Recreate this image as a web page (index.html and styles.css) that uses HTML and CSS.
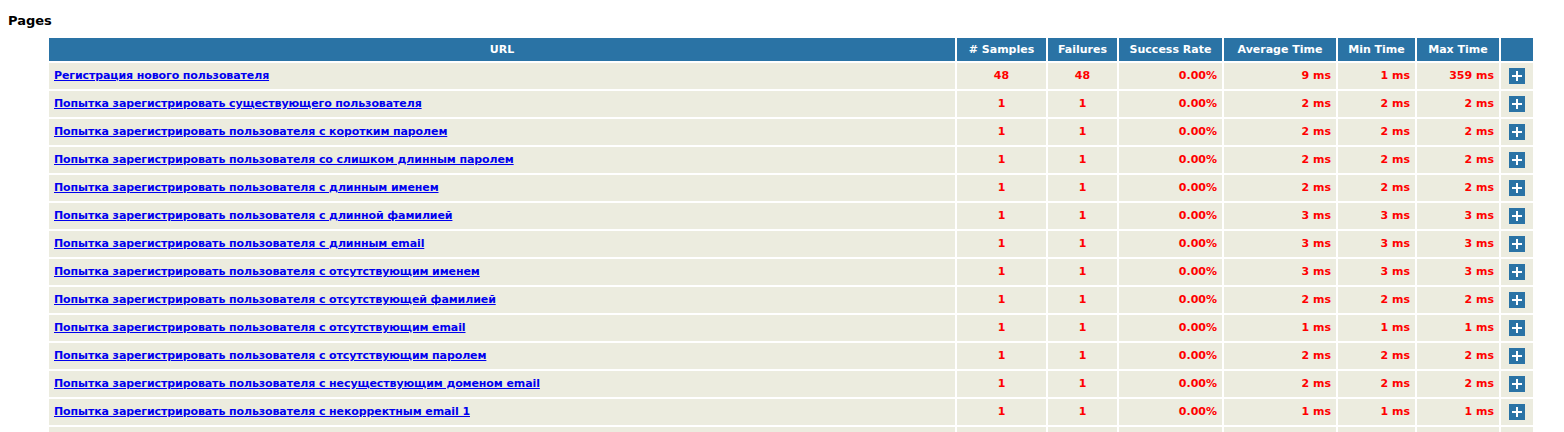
FILE: index.html
```html
<!DOCTYPE html>
<html>
<head>
<meta charset="utf-8">
<link rel="stylesheet" href="styles.css">
</head>
<body>
<h2 class="title">Pages</h2>
<table class="details">
<colgroup>
<col class="c-url"><col class="c-samples"><col class="c-fail"><col class="c-rate"><col class="c-avg"><col class="c-min"><col class="c-max"><col class="c-btn">
</colgroup>
<thead>
<tr><th>URL</th><th># Samples</th><th>Failures</th><th>Success Rate</th><th>Average Time</th><th>Min Time</th><th>Max Time</th><th></th></tr>
</thead>
<tbody>
<tr><td class="url"><a href="#">Регистрация нового пользователя</a></td><td class="ctr">48</td><td class="ctr">48</td><td>0.00%</td><td>9 ms</td><td>1 ms</td><td>359 ms</td><td class="btn"><span class="plus"></span></td></tr>
<tr><td class="url"><a href="#">Попытка зарегистрировать существующего пользователя</a></td><td class="ctr">1</td><td class="ctr">1</td><td>0.00%</td><td>2 ms</td><td>2 ms</td><td>2 ms</td><td class="btn"><span class="plus"></span></td></tr>
<tr><td class="url"><a href="#">Попытка зарегистрировать пользователя с коротким паролем</a></td><td class="ctr">1</td><td class="ctr">1</td><td>0.00%</td><td>2 ms</td><td>2 ms</td><td>2 ms</td><td class="btn"><span class="plus"></span></td></tr>
<tr><td class="url"><a href="#">Попытка зарегистрировать пользователя со слишком длинным паролем</a></td><td class="ctr">1</td><td class="ctr">1</td><td>0.00%</td><td>2 ms</td><td>2 ms</td><td>2 ms</td><td class="btn"><span class="plus"></span></td></tr>
<tr><td class="url"><a href="#">Попытка зарегистрировать пользователя с длинным именем</a></td><td class="ctr">1</td><td class="ctr">1</td><td>0.00%</td><td>2 ms</td><td>2 ms</td><td>2 ms</td><td class="btn"><span class="plus"></span></td></tr>
<tr><td class="url"><a href="#">Попытка зарегистрировать пользователя с длинной фамилией</a></td><td class="ctr">1</td><td class="ctr">1</td><td>0.00%</td><td>3 ms</td><td>3 ms</td><td>3 ms</td><td class="btn"><span class="plus"></span></td></tr>
<tr><td class="url"><a href="#">Попытка зарегистрировать пользователя с длинным email</a></td><td class="ctr">1</td><td class="ctr">1</td><td>0.00%</td><td>3 ms</td><td>3 ms</td><td>3 ms</td><td class="btn"><span class="plus"></span></td></tr>
<tr><td class="url"><a href="#">Попытка зарегистрировать пользователя с отсутствующим именем</a></td><td class="ctr">1</td><td class="ctr">1</td><td>0.00%</td><td>3 ms</td><td>3 ms</td><td>3 ms</td><td class="btn"><span class="plus"></span></td></tr>
<tr><td class="url"><a href="#">Попытка зарегистрировать пользователя с отсутствующей фамилией</a></td><td class="ctr">1</td><td class="ctr">1</td><td>0.00%</td><td>2 ms</td><td>2 ms</td><td>2 ms</td><td class="btn"><span class="plus"></span></td></tr>
<tr><td class="url"><a href="#">Попытка зарегистрировать пользователя с отсутствующим email</a></td><td class="ctr">1</td><td class="ctr">1</td><td>0.00%</td><td>1 ms</td><td>1 ms</td><td>1 ms</td><td class="btn"><span class="plus"></span></td></tr>
<tr><td class="url"><a href="#">Попытка зарегистрировать пользователя с отсутствующим паролем</a></td><td class="ctr">1</td><td class="ctr">1</td><td>0.00%</td><td>2 ms</td><td>2 ms</td><td>2 ms</td><td class="btn"><span class="plus"></span></td></tr>
<tr><td class="url"><a href="#">Попытка зарегистрировать пользователя с несуществующим доменом email</a></td><td class="ctr">1</td><td class="ctr">1</td><td>0.00%</td><td>2 ms</td><td>2 ms</td><td>2 ms</td><td class="btn"><span class="plus"></span></td></tr>
<tr><td class="url"><a href="#">Попытка зарегистрировать пользователя с некорректным email 1</a></td><td class="ctr">1</td><td class="ctr">1</td><td>0.00%</td><td>1 ms</td><td>1 ms</td><td>1 ms</td><td class="btn"><span class="plus"></span></td></tr>
<tr><td class="url"></td><td class="ctr"></td><td class="ctr"></td><td></td><td></td><td></td><td></td><td class="btn"></td></tr>
</tbody>
</table>
</body>
</html>
```
FILE: styles.css
```css
html, body {
  margin: 0;
  padding: 0;
  background: #ffffff;
}
body {
  padding: 0 8px;
  font-family: "DejaVu Sans", Verdana, sans-serif;
  font-size: 11px;
}
.title {
  margin: 0;
  padding-top: 13px;
  font-size: 13px;
  line-height: 16px;
  font-weight: bold;
  color: #000000;
}
.details {
  margin-top: 7px;
  margin-left: 39px;
  width: 1488px;
  table-layout: fixed;
  border-collapse: separate;
  border-spacing: 2px;
}
.c-url { width: 906px; }
.c-samples { width: 89px; }
.c-fail { width: 69px; }
.c-rate { width: 103px; }
.c-avg { width: 112px; }
.c-min { width: 77px; }
.c-max { width: 82px; }
.c-btn { width: 32px; }
.details th {
  background: #2a73a5;
  color: #ffffff;
  font-weight: bold;
  font-size: 11px;
  height: 23px;
  padding: 0 5px;
  line-height: 14px;
  text-align: center;
  white-space: nowrap;
}
.details td {
  background: #ececdf;
  color: #ff0000;
  font-weight: bold;
  font-size: 11px;
  height: 26px;
  padding: 0 5px;
  line-height: 14px;
  text-align: right;
  white-space: nowrap;
}
.details td.url {
  text-align: left;
  letter-spacing: -0.1px;
}
.details td.ctr {
  text-align: center;
}
.details td.btn {
  text-align: center;
  padding: 0;
}
.details a {
  color: #0000ee;
  text-decoration: underline;
}
.plus {
  display: inline-block;
  position: relative;
  width: 16px;
  height: 16px;
  background: #2a73a5;
  vertical-align: middle;
}
.plus::before, .plus::after {
  content: "";
  position: absolute;
  background: #ffffff;
}
.plus::before {
  left: 3px;
  top: 7px;
  width: 10px;
  height: 2px;
}
.plus::after {
  left: 7px;
  top: 3px;
  width: 2px;
  height: 10px;
}
```
